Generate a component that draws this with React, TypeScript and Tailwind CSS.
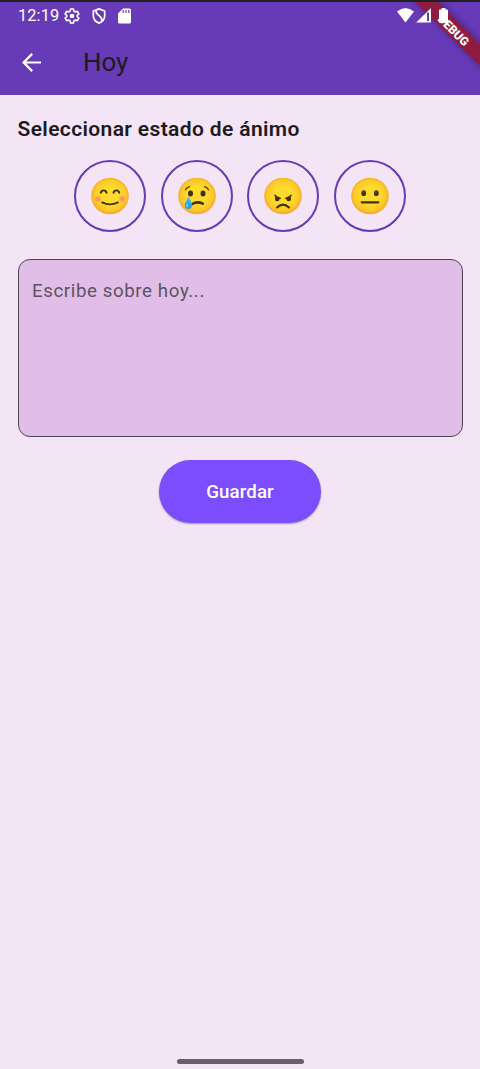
import type { ReactNode } from "react";

function Face({ children }: { children: ReactNode }) {
  return (
    <button className="flex size-[72px] items-center justify-center rounded-full border-2 border-[#673ab7]">
      <svg className="size-[38px]" viewBox="0 0 38 38">
        <defs>
          <radialGradient id="skin" cx="50%" cy="48%" r="52%">
            <stop offset="0.45" stopColor="#fddb2c" />
            <stop offset="0.8" stopColor="#fbc928" />
            <stop offset="1" stopColor="#f2a532" />
          </radialGradient>
          <radialGradient id="blush">
            <stop offset="0" stopColor="#f58b62" />
            <stop offset="0.5" stopColor="#f58b62" stopOpacity="0.7" />
            <stop offset="1" stopColor="#f58b62" stopOpacity="0" />
          </radialGradient>
          <linearGradient id="tear" x1="0" y1="0" x2="0" y2="1">
            <stop offset="0" stopColor="#4fb8ee" />
            <stop offset="1" stopColor="#1c9ae8" />
          </linearGradient>
        </defs>
        <ellipse cx="19" cy="19" rx="18.8" ry="18.3" fill="url(#skin)" />
        {children}
      </svg>
    </button>
  );
}

const ink = "#45300f";

export default function App() {
  return (
    <div className="relative flex h-[1069px] w-[480px] flex-col overflow-hidden bg-[#f3e5f5] font-['Roboto',sans-serif] text-[#1d1b20]">
      <header className="h-[95px] shrink-0 border-t-2 border-[#211f20] bg-[#673ab7]">
        <div className="flex h-7 items-center pl-[18px] text-white">
          <span className="w-[46px] text-[16.4px] leading-7 tracking-[0.1px]">12:19</span>
          <svg className="size-4" viewBox="0 0 16 16" fill="none" stroke="white" strokeWidth="1.6" strokeLinejoin="round">
            <path d="M6.500 1h3l.4 2.100 1.500.9 2-.7 1.500 2.600-1.600 1.400v1.400l1.600 1.400-1.500 2.600-2-.7-1.500.9-.4 2.100h-3l-.4-2.100-1.500-.9-2 .7-1.500-2.600 1.600-1.400V7.300L1.100 5.900l1.500-2.600 2 .7 1.500-.9z" />
            <circle cx="8" cy="8" r="2.300" fill="white" stroke="none" />
          </svg>
          <svg className="ml-[10.500px] size-4" viewBox="0 0 16 16" fill="none" stroke="white" strokeWidth="1.700" strokeLinejoin="round">
            <path d="M8 .9 13.700 3v4.600c0 3.500-2.300 6.300-5.700 7.500-3.400-1.200-5.700-4-5.700-7.500V3z" />
            <path d="M5 2.500C4.400 7.500 11.500 7.300 11 12.800" />
          </svg>
          <svg className="ml-[11px] h-4 w-[13px]" viewBox="0 0 13 16">
            <path d="M5 .5h6.500q1.500 0 1.500 1.500v12q0 1.500-1.500 1.500h-10Q0 15.500 0 14V5.500z" fill="white" />
            <path d="M5.200 2v3M8 2v3M10.800 2v3" stroke="#673ab7" strokeWidth="1.200" />
          </svg>
        </div>
        <div className="flex h-[65px] items-center pl-[22px]">
          <svg className="-mt-[1px] size-[19px]" viewBox="0 0 19 19" fill="none" stroke="white" strokeWidth="2.200">
            <path d="M19 9.500H1.600M10.200 .9 1.600 9.500l8.600 8.600" />
          </svg>
          <h1 className="-mt-[2px] ml-[42px] text-[25.900px] leading-8">Hoy</h1>
        </div>
      </header>

      <svg className="absolute top-0 right-0 h-[95px] w-[96px]" viewBox="384 0 96 95">
        <defs>
          <filter id="ribbonShade" x="-20%" y="-20%" width="140%" height="140%">
            <feGaussianBlur stdDeviation="3" />
          </filter>
        </defs>
        <path d="M412-2H436L484 46V70z" fill="#351d62" opacity=".6" filter="url(#ribbonShade)" />
        <path d="M415 2H438L480 44V66z" fill="#8e1c40" />
        <path d="M384 0H480V2H384z" fill="#211f20" />
        <path d="M397 11.500Q405.500 4.500 414 11.500L405.500 22.500z" fill="white" />
        <path d="M416.200 22.500 431 8V22.500z" fill="white" />
        <path d="M427 12.500h2V21h-2z" fill="#673ab7" />
        <text transform="translate(453.300 30.400) rotate(45)" textAnchor="middle" dominantBaseline="central" fill="white" fontFamily="Roboto" fontWeight="900" fontSize="12">DEBUG</text>
        <path d="M441.500 8h4v1.500h1.500q1 0 1 1V22q0 1-1 1h-7q-1 0-1-1V10.500q0-1 1-1h1.500z" fill="white" />
      </svg>

      <main className="flex flex-col px-[17.500px] pt-[21px]">
        <h2 className="text-[21px] leading-[26px] font-semibold tracking-[0.370px]">Seleccionar estado de ánimo</h2>
        <div className="mt-[18px] flex justify-center gap-[14.400px]">
          <Face>
            <g fill="none" stroke={ink} strokeWidth="1.900" strokeLinecap="round">
              <path d="M9.800 15.800c.7-3.300 5-3.300 5.700 0M22.500 15.800c.7-3.300 5-3.300 5.700 0" />
              <path d="M11.200 25.400q7.800 4 15.600 0" />
            </g>
            <circle cx="7" cy="21.800" r="3.800" fill="url(#blush)" />
            <circle cx="31" cy="21.800" r="3.800" fill="url(#blush)" />
          </Face>
          <Face>
            <ellipse cx="12.500" cy="16.500" rx="2.500" ry="3" fill={ink} />
            <ellipse cx="25" cy="16.500" rx="2.500" ry="3" fill={ink} />
            <g fill="none" stroke={ink} strokeWidth="1.200" strokeLinecap="round">
              <path d="M7.500 12.800q1.300-2.500 4-3.200M26.500 9.600q2.700.7 4 3.200" />
              <path d="M14.300 27q5-3 10.500-.3" strokeWidth="2.600" />
            </g>
            <path d="M10.500 19.500c1 3 3.600 6 3.600 8.800 0 5-7.500 5-7.500 0 0-2.600 3-5.800 3.900-8.800z" fill="url(#tear)" />
            <ellipse cx="9" cy="28.500" rx="1" ry="1.600" fill="#77ccf5" />
          </Face>
          <Face>
            <circle cx="13.200" cy="21.900" r="2.300" fill={ink} />
            <circle cx="24.800" cy="21.900" r="2.300" fill={ink} />
            <g fill="none" stroke={ink} strokeLinecap="round">
              <path d="M11 18.500q2 2.500 5 2.800M27 18.500q-2 2.500-5 2.800" strokeWidth="1.700" />
              <path d="M13 30.500q6-5.700 12 0" strokeWidth="2" />
            </g>
          </Face>
          <Face>
            <ellipse cx="12.700" cy="16.200" rx="2.400" ry="2.900" fill={ink} />
            <ellipse cx="25.300" cy="16.200" rx="2.400" ry="2.900" fill={ink} />
            <path d="M10.800 25.300h16.400" stroke={ink} strokeWidth="2.300" strokeLinecap="round" />
            <circle cx="12.200" cy="15" r=".7" fill="#8c6636" />
            <circle cx="24.800" cy="15" r=".7" fill="#8c6636" />
          </Face>
        </div>
        <textarea
          placeholder="Escribe sobre hoy..."
          className="mt-[27px] block h-[178px] resize-none rounded-[12px] border border-[#49454f] bg-[#e1bee7] px-[13.500px] pt-[17px] text-[18.700px] leading-[28px] tracking-[0.600px] outline-none placeholder:text-[#5d5361]"
        />
        <button className="mt-[23px] h-[63px] w-[162px] self-center rounded-full bg-[#7c4dff] pt-px text-[18.700px] font-medium tracking-[0.120px] text-white shadow-[0_1px_2px_rgba(0,0,0,0.35)]">
          Guardar
        </button>
      </main>
      <div className="mt-auto mb-[5.500px] h-[4.500px] w-[127px] self-center rounded-full bg-[#65606a]" />
    </div>
  );
}
